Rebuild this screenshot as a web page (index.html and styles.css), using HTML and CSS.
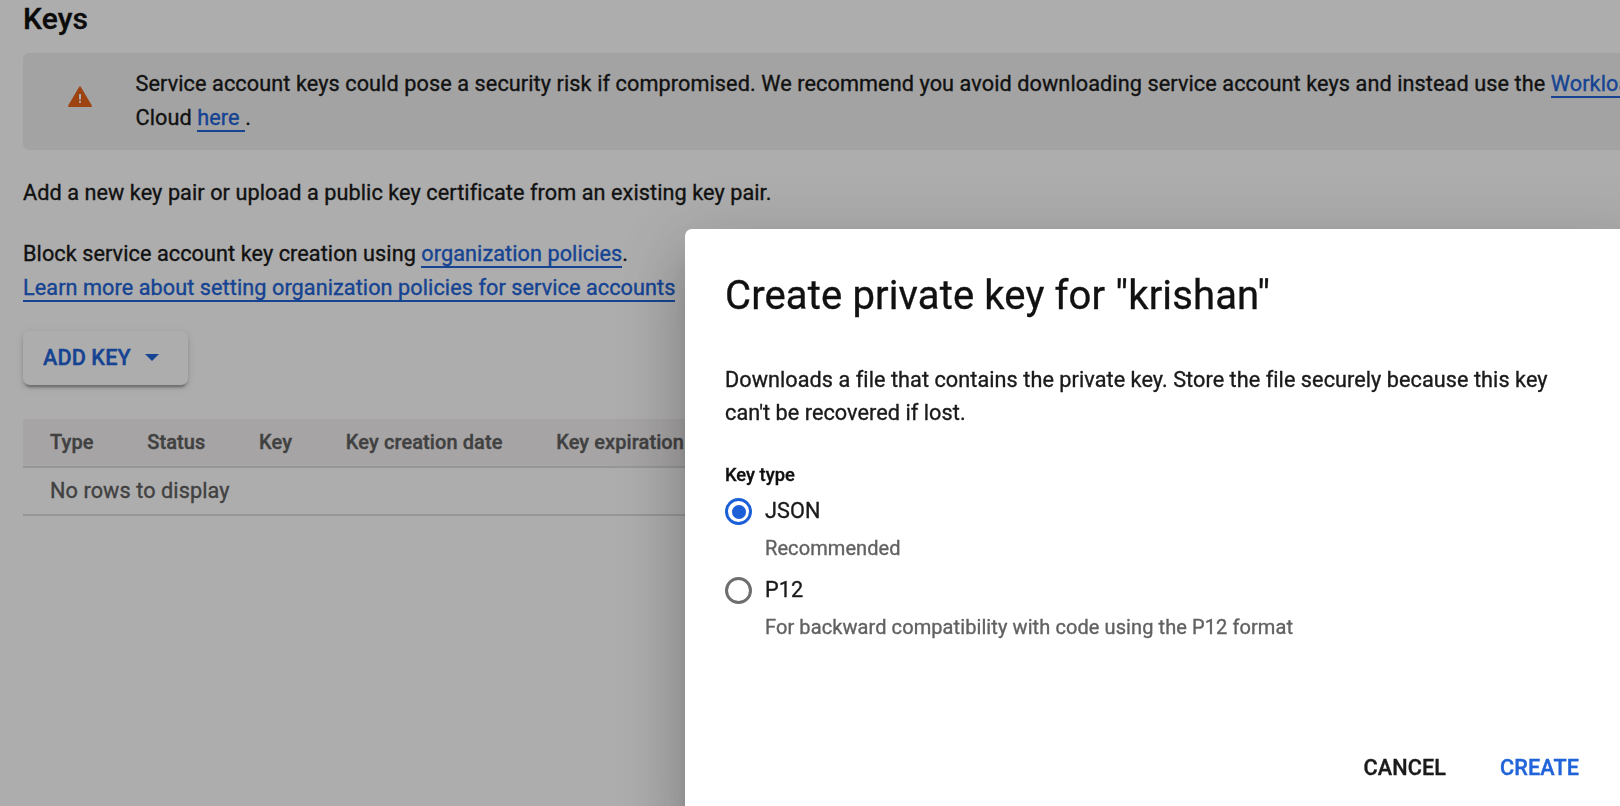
FILE: index.html
```html
<!DOCTYPE html>
<html lang="en">
<head>
<meta charset="utf-8">
<title>Keys</title>
<link rel="stylesheet" href="styles.css">
</head>
<body>
<main class="page">
  <h1 class="heading">Keys</h1>
  <section class="banner">
    <svg class="warning" viewBox="0 0 24 21"><path fill="#e8641b" d="M11.2.7a1 1 0 0 1 1.6 0l11 18.8a1 1 0 0 1-.9 1.5H1.1a1 1 0 0 1-.9-1.5z"/><path fill="#fff" d="M11 8h2v5.4h-2zM11 14.8h2v2h-2z"/></svg>
    <p class="banner-text">Service account keys could pose a security risk if compromised. We recommend you avoid downloading service account keys and instead use the <a class="link">Workload</a><br>Cloud <a class="link">here&nbsp;</a>.</p>
  </section>
  <p class="para">Add a new key pair or upload a public key certificate from an existing key pair.</p>
  <p class="para policies">Block service account key creation using <a class="link">organization policies</a>.<br><a class="link">Learn more about setting organization policies for service accounts</a></p>
  <button class="add-key">ADD KEY <svg class="caret" viewBox="0 0 14 7"><path fill="currentColor" d="M0 0h14L7 7z"/></svg></button>
  <div class="table">
    <div class="table-head"><span>Type</span><span>Status</span><span>Key</span><span>Key creation date</span><span>Key expiration</span></div>
    <div class="table-row">No rows to display</div>
  </div>
</main>
<div class="backdrop">
  <div class="dialog">
    <h2 class="title">Create private key for "krishan"</h2>
    <p class="desc">Downloads a file that contains the private key. Store the file securely because this key<br>can't be recovered if lost.</p>
    <div class="label">Key type</div>
    <div class="option"><span class="radio checked"></span><span class="option-name">JSON</span><span class="hint">Recommended</span></div>
    <div class="option"><span class="radio"></span><span class="option-name">P12</span><span class="hint">For backward compatibility with code using the P12 format</span></div>
    <div class="actions"><button class="action">CANCEL</button><button class="action primary">CREATE</button></div>
  </div>
</div>
</body>
</html>
```
FILE: styles.css
```css
* { box-sizing: border-box; }
html, body { height: 100%; overflow: hidden; }
body {
  margin: 0;
  background: #fff;
  color: #1a1a1a;
  font: 400 21.67px/33.3px Roboto, sans-serif;
  letter-spacing: .088px;
  -webkit-text-stroke: .35px currentColor;
}
h1, h2, p { margin: 0; font-weight: 400; }
button { border: 0; padding: 0; background: none; font: inherit; font-weight: 500; letter-spacing: inherit; }
.link { color: #2163d8; border-bottom: 2px solid #2163d8; }
.page { padding-left: 23px; overflow: hidden; }
.heading { height: 53px; padding-top: 2px; font-size: 30px; font-weight: 500; color: #111; }
.banner { display: flex; height: 97px; padding: 14px 0 0 45px; border-radius: 6px 0 0 6px; background: #f0f0f0; overflow: hidden; }
.warning { width: 24px; height: 21px; margin: 19px 43.5px 0 0; flex: none; }
.banner-text { line-height: 33.5px; white-space: nowrap; }
.para { margin-top: 26px; white-space: nowrap; letter-spacing: .07px; }
.policies { margin-top: 28px; }
.add-key {
  display: flex;
  align-items: center;
  width: 165px;
  height: 54px;
  margin-top: 27px;
  padding: 0 0 1px 20px;
  border-radius: 7px;
  background: #fff;
  color: #2163d8;
  box-shadow: 0 5px 2px -3px rgba(0,0,0,.2), 0 3px 3px rgba(0,0,0,.14), 0 2px 8px rgba(0,0,0,.12);
}
.caret { width: 14px; height: 7px; margin-left: 14px; }
.table { margin-top: 34px; color: #606060; }
.table-head { display: flex; gap: 53.7px; height: 49px; padding: 7px 27px; background: #f5f2f3; border-bottom: 2px solid #dedede; font-size: 20px; font-weight: 500; white-space: nowrap; }
.table-row { height: 48px; padding: 6px 27px; border-bottom: 2px solid #dedede; }
.backdrop { position: fixed; inset: 0; overflow: hidden; background: rgba(0,0,0,.32); }
.dialog {
  position: absolute;
  left: 685px;
  top: 229px;
  width: 960px;
  height: 610px;
  padding: 40px;
  border-radius: 7px;
  background: #fff;
  box-shadow: 0 18px 25px -12px rgba(0,0,0,.2), 0 40px 63px 5px rgba(0,0,0,.14), 0 15px 77px 13px rgba(0,0,0,.12);
}
.title { font-size: 40px; line-height: 53px; letter-spacing: .14px; color: #111; }
.desc { margin-top: 41px; white-space: nowrap; letter-spacing: .055px; }
.label { margin-top: 30px; line-height: 30px; font-size: 18.33px; font-weight: 500; letter-spacing: 0; color: #111; }
.option { display: grid; grid-template-columns: 40px 1fr; grid-template-rows: 43px 36px; }
.label + .option { margin-top: 1px; }
.radio { width: 27px; height: 27px; margin-top: 7px; border: 3px solid #6e6e6e; border-radius: 50%; }
.radio.checked { padding: 3.5px; border-color: #1c60d8; background: #1c60d8; background-clip: content-box; }
.option-name { line-height: 40px; }
.hint { grid-column: 2; color: #616161; font-size: 20px; line-height: 28px; }
.actions { display: flex; justify-content: flex-end; gap: 54px; margin-top: 102px; padding-right: 26px; }
.action { color: #1a1a1a; }
.primary { color: #2163d8; }
```
